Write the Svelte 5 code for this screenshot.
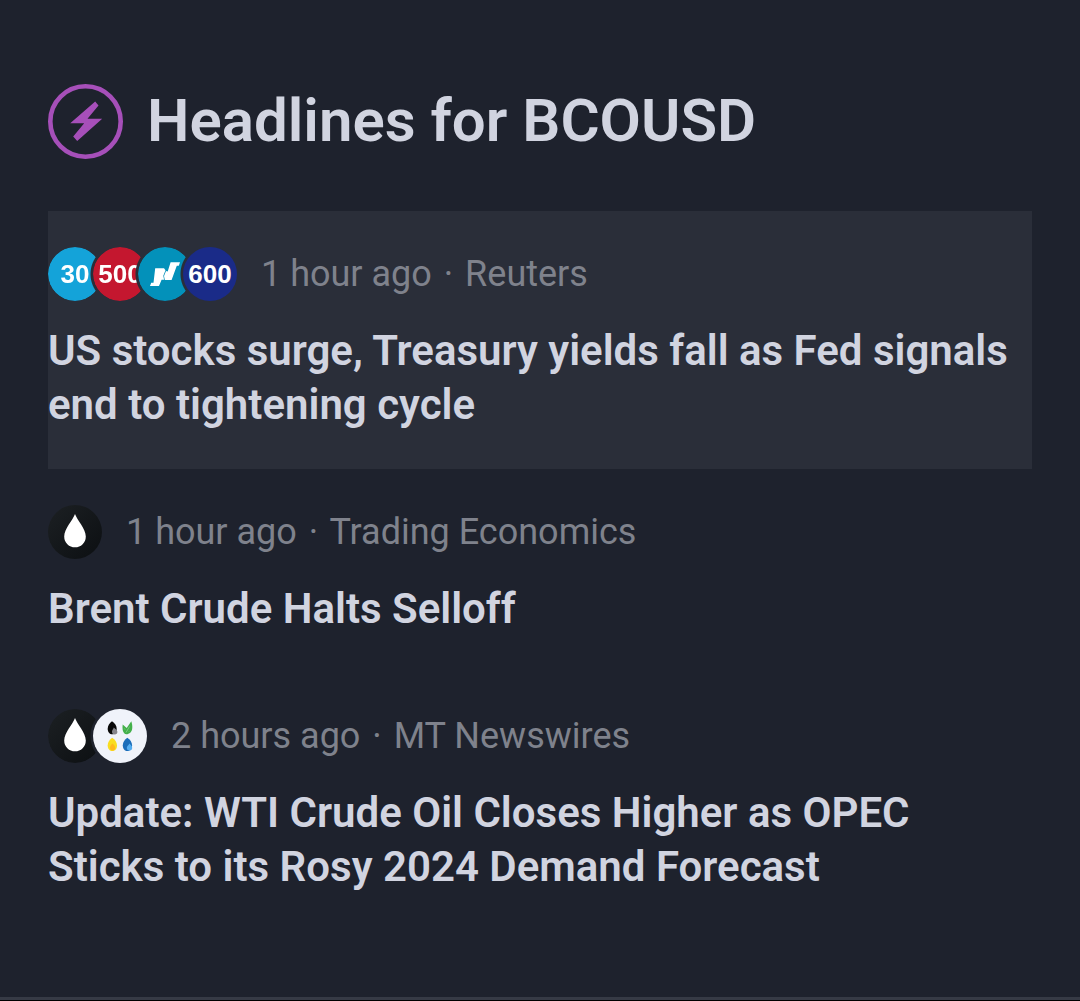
<script>
    const symbol = 'BCOUSD';

    const headlines = [
        {
            time: '1 hour ago',
            source: 'Reuters',
            title: 'US stocks surge, Treasury yields fall as Fed signals end to tightening cycle',
            logos: ['dow', 'spx', 'nasdaq', 'stoxx'],
            active: true
        },
        {
            time: '1 hour ago',
            source: 'Trading Economics',
            title: 'Brent Crude Halts Selloff',
            logos: ['brent']
        },
        {
            time: '2 hours ago',
            source: 'MT Newswires',
            title: 'Update: WTI Crude Oil Closes Higher as OPEC Sticks to its Rosy 2024 Demand Forecast',
            logos: ['brent', 'energy']
        }
    ];

    const numbers = { dow: '30', spx: '500', stoxx: '600' };
</script>

<main>
    <header>
        <svg class="flash" viewBox="0 0 75 75" aria-hidden="true">
            <circle cx="37.5" cy="37.5" r="35.2" fill="none" stroke="#a64fb9" stroke-width="4.6" />
            <path d="M47.2 17.5 22.2 39.2h14L25.2 52.5l4 4.5L54.2 34.8H39.5L50.5 21.5z" fill="#a64fb9" />
        </svg>
        <h1>Headlines for {symbol}</h1>
    </header>

    <section class="list">
        {#each headlines as item}
            <article class:active={item.active}>
                <div class="meta">
                    <div class="logos">
                        {#each item.logos as logo}
                            <span class="logo {logo}">
                                {#if numbers[logo]}
                                    {numbers[logo]}
                                {:else if logo === 'nasdaq'}
                                    <svg viewBox="0 0 54 54" aria-hidden="true">
                                        <path d="M17.2 21.3H26l1.500 2-2.200 5.500.8 4h-2.500L21 39h-9l1.200-3.200h2.300z" fill="#fff" />
                                        <path d="M32.600 15.300H42l-1.200 3.500h-2L33.600 33h-6.800l-.8-4 2-5 1.700.5z" fill="#fff" />
                                    </svg>
                                {:else if logo === 'brent'}
                                    <svg viewBox="0 0 54 54" aria-hidden="true">
                                        <path d="M27 9C25 15 16.2 23.5 16.2 31.5a10.8 10.8 0 0 0 21.6 0C37.8 23.5 29 15 27 9z" fill="#fff" />
                                    </svg>
                                {:else}
                                    <svg viewBox="0 0 54 54" aria-hidden="true">
                                        <path d="M19 12.2c-2.5 1.8-4.3 4.5-4.3 7.5 0 3.5 2 5.6 4.5 5.6s4.5-2 4.5-5.3c0-3.5-2-6-4.7-7.800z" fill="#080808" />
                                        <path d="M20.8 18.5c-.3 1.2-1.8 2.5-1.8 4.2a2.7 2.7 0 0 0 5.4 0c0-1.7-2.4-2.7-3.6-4.2z" fill="#85858b" />
                                        <path d="M29.7 15.5l4 3.5 4.6-6.8c1.5 4.5 1.5 9-.8 11.3-2 1.8-4.5 2.2-5.8 1.3-2.2-2-2.5-5.3-2-9.3z" fill="#43b04a" />
                                        <path d="M33 23.500 36.500 17.500M31.500 19.500l.5 1M36 22.500l.5-.5" fill="none" stroke="#a0dca2" stroke-width=".6" />
                                        <path d="M19.2 28.7c-2.5 1.8-4.5 4.5-4.5 7.5 0 3.6 2 5.8 4.7 5.8s4.6-2.2 4.6-5.500c0-3.300-2-6-4.800-7.800z" fill="#f9dd20" />
                                        <path d="M19.5 34.5c-1 1-2.5 2.5-2.5 4.3a2.6 2.6 0 0 0 5.2 0c0-1.8-1.7-3.3-2.7-4.3z" fill="#ffb91d" />
                                        <path d="M34.3 28.7c-2.5 1.8-4.5 4.5-4.5 7.5 0 3.6 2 5.8 4.7 5.8s4.6-2.2 4.6-5.5c0-3.3-2-6-4.8-7.8z" fill="#1b6db9" />
                                        <path d="M36.5 34.5c-.5 1.2-2.7 2.5-2.7 4.3a2.7 2.7 0 0 0 5.4 0c0-1.8-1.7-3-2.7-4.3z" fill="#53acf0" />
                                    </svg>
                                {/if}
                            </span>
                        {/each}
                    </div>
                    <span>{item.time} <span class="dot">·</span> {item.source}</span>
                </div>
                <h2>{item.title}</h2>
            </article>
        {/each}
    </section>

    <footer></footer>
</main>

<style>
    :global(body) {
        background: #1e222d;
    }

    main {
        display: flex;
        flex-direction: column;
        box-sizing: border-box;
        min-height: 100vh;
        padding-top: 84px;
        font-family: Roboto, sans-serif;
        color: #d1d4e0;
    }

    header {
        display: flex;
        align-items: flex-start;
        gap: 24px;
        padding: 0 48px;
        margin-bottom: 52px;
    }

    .flash {
        flex: none;
        width: 75px;
        height: 75px;
    }

    h1 {
        margin: 0;
        font-size: 60px;
        font-weight: 600;
        line-height: 74px;
    }

    .list {
        padding: 0 48px;
    }

    article {
        padding: 36px 0 37px;
    }

    .active {
        background: #2a2e39;
    }

    .meta {
        display: flex;
        align-items: center;
        gap: 24px;
        margin-bottom: 23px;
        font-size: 36px;
        line-height: 54px;
        color: #7f828c;
    }

    .dot {
        margin: 0 3px;
    }

    .logos {
        display: flex;
    }

    .logo {
        display: flex;
        align-items: center;
        justify-content: center;
        width: 54px;
        height: 54px;
        border-radius: 50%;
        overflow: hidden;
        font-family: "Liberation Sans", Arial, sans-serif;
        font-size: 26px;
        font-weight: 700;
        color: #fff;
    }

    .logo + .logo {
        margin-left: -9px;
    }

    /* cut out the part that the next logo overlaps */
    .logo:not(:last-child) {
        mask-image: radial-gradient(circle at 72px 27px, transparent 29px, #000 30px);
    }

    .logo svg {
        width: 54px;
        height: 54px;
    }

    .dow {
        background: #14a3d9;
    }

    .spx {
        background: #c4172f;
    }

    .nasdaq {
        background: #0391ba;
    }

    .stoxx {
        background: #1a2b88;
    }

    .brent {
        background: linear-gradient(135deg, #1c2023, #0c0f12);
    }

    .energy {
        background: #f0f3fa;
    }

    h2 {
        margin: 0;
        font-size: 42px;
        font-weight: 600;
        line-height: 54px;
    }

    footer {
        height: 3px;
        margin-top: auto;
        background: #363a45;
        border-bottom: 1px solid #000;
    }
</style>
